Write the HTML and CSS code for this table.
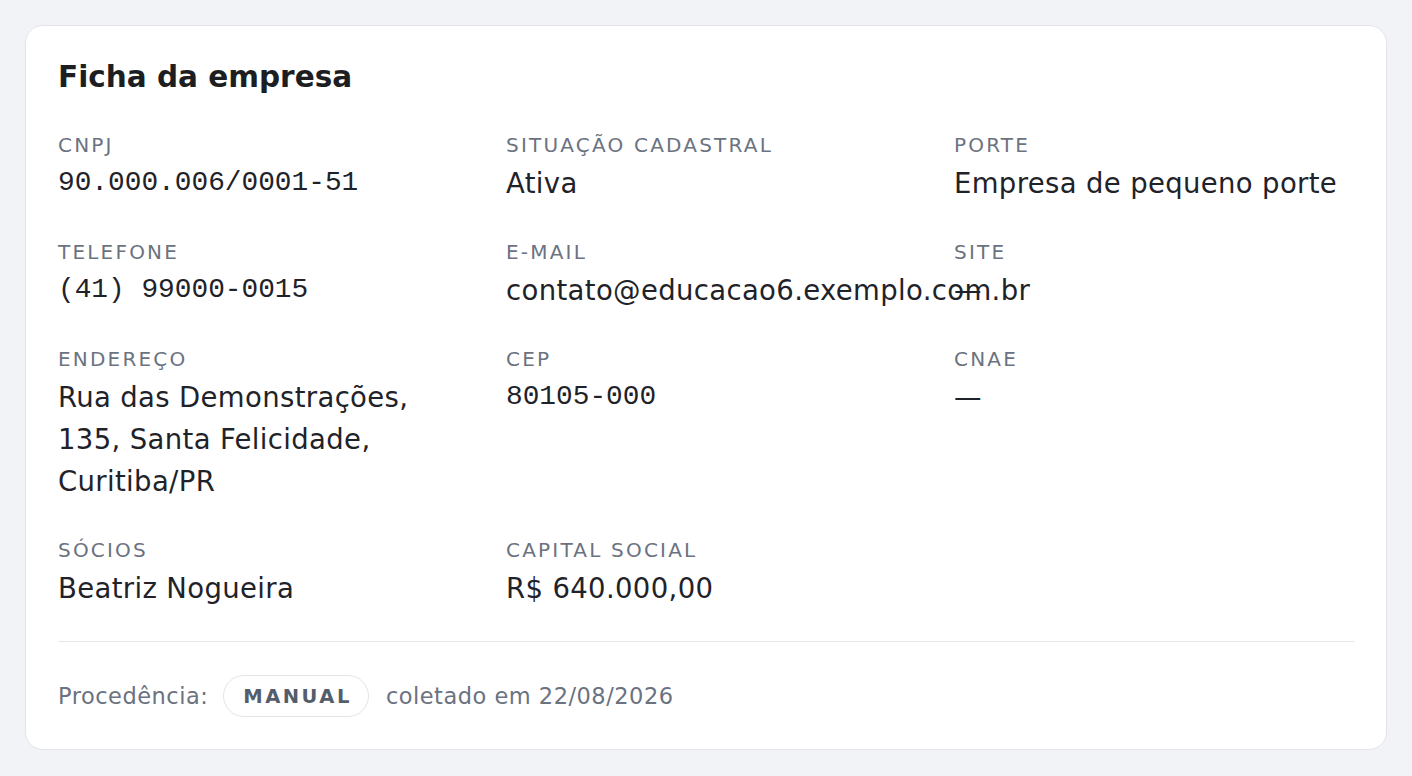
FILE: index.html
```html
<!DOCTYPE html>
<html lang="pt-BR">
<head>
<meta charset="utf-8">
<title>Ficha da empresa</title>
<link rel="stylesheet" href="styles.css">
</head>
<body>
<main class="page">
  <section class="card">
    <h1 class="card-title">Ficha da empresa</h1>
    <dl class="fields">
      <div class="field">
        <dt class="label">CNPJ</dt>
        <dd class="value mono">90.000.006/0001-51</dd>
      </div>
      <div class="field">
        <dt class="label">Situação cadastral</dt>
        <dd class="value">Ativa</dd>
      </div>
      <div class="field">
        <dt class="label">Porte</dt>
        <dd class="value">Empresa de pequeno porte</dd>
      </div>
      <div class="field">
        <dt class="label">Telefone</dt>
        <dd class="value mono">(41) 99000-0015</dd>
      </div>
      <div class="field">
        <dt class="label">E-mail</dt>
        <dd class="value">contato@educacao6.exemplo.com.br</dd>
      </div>
      <div class="field">
        <dt class="label">Site</dt>
        <dd class="value">—</dd>
      </div>
      <div class="field">
        <dt class="label">Endereço</dt>
        <dd class="value">Rua das Demonstrações, 135, Santa Felicidade, Curitiba/PR</dd>
      </div>
      <div class="field">
        <dt class="label">CEP</dt>
        <dd class="value mono">80105-000</dd>
      </div>
      <div class="field">
        <dt class="label">CNAE</dt>
        <dd class="value">—</dd>
      </div>
      <div class="field">
        <dt class="label">Sócios</dt>
        <dd class="value">Beatriz Nogueira</dd>
      </div>
      <div class="field">
        <dt class="label">Capital social</dt>
        <dd class="value">R$ 640.000,00</dd>
      </div>
    </dl>
    <footer class="provenance">
      <span class="prov-label">Procedência:</span>
      <span class="pill">Manual</span>
      <span class="prov-date">coletado em 22/08/2026</span>
    </footer>
  </section>
</main>
</body>
</html>
```

FILE: styles.css
```css
* {
  box-sizing: border-box;
}

html, body {
  margin: 0;
  padding: 0;
  background: #f2f3f6;
}

body {
  font-family: "DejaVu Sans", "Noto Sans", sans-serif;
  color: #1f2329;
}

.page {
  padding: 25px;
}

.card {
  background: #ffffff;
  border: 1px solid #e2e4e8;
  border-radius: 18px;
  padding: 32px;
}

.card-title {
  margin: 0;
  font-size: 29.5px;
  line-height: 38px;
  font-weight: 700;
  color: #1c1e22;
}

.fields {
  margin: 35px 0 0 0;
  display: grid;
  grid-template-columns: repeat(3, minmax(0, 1fr));
  column-gap: 48px;
  row-gap: 34px;
}

.field {
  min-width: 0;
  display: flex;
  flex-direction: column;
  gap: 3px;
}

.label {
  margin: 0;
  font-size: 20px;
  line-height: 28px;
  text-transform: uppercase;
  letter-spacing: 2.2px;
  color: #6b7280;
  white-space: nowrap;
}

.value {
  margin: 0;
  font-size: 27.5px;
  line-height: 42px;
  letter-spacing: 0.35px;
  color: #1f2329;
}

.value.mono {
  font-family: "Liberation Mono", "DejaVu Sans Mono", monospace;
  font-size: 27.8px;
  letter-spacing: 0;
}

.provenance {
  margin-top: 32px;
  border-top: 1px solid #e5e7eb;
  padding-top: 33px;
  display: flex;
  align-items: center;
  gap: 15px;
  font-size: 22.5px;
  letter-spacing: 0.5px;
  color: #6b7280;
}

.pill {
  display: inline-flex;
  align-items: center;
  height: 42px;
  padding: 0 16px 0 19px;
  border: 1.5px solid #e3e5e9;
  border-radius: 999px;
  font-size: 19.5px;
  font-weight: 700;
  letter-spacing: 2.5px;
  text-transform: uppercase;
  color: #545d6b;
}

.prov-date {
  margin-left: 2px;
}
```
